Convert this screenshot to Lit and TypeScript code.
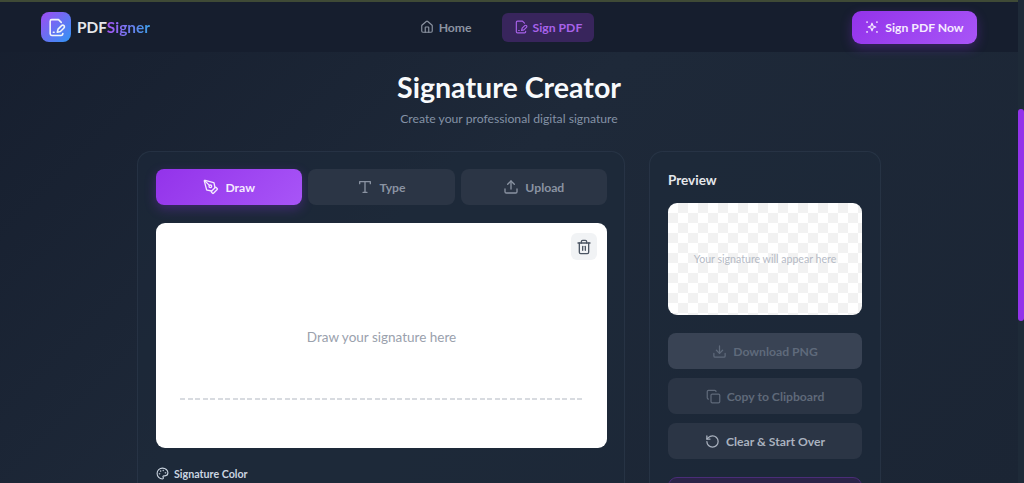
import { LitElement, css, html, svg } from "lit";
import { customElement } from "lit/decorators.js";

const icon = (body: unknown, size = 16) => html`<svg
  width=${size}
  height=${size}
  viewBox="0 0 24 24"
  fill="none"
  stroke="currentColor"
  stroke-width="2"
  stroke-linecap="round"
  stroke-linejoin="round"
>
  ${body}
</svg>`;

const fileSign = svg`<path d="M20 19.5v.5a2 2 0 0 1-2 2H6a2 2 0 0 1-2-2V4a2 2 0 0 1 2-2h8.5L18 5.5" /><path d="M8 18h1" /><path d="M18.42 9.61a2.1 2.1 0 1 1 2.97 2.97L16.95 17 13 18l.99-3.95 4.43-4.44Z" />`;
const home = svg`<path d="M15 21v-8a1 1 0 0 0-1-1h-4a1 1 0 0 0-1 1v8" /><path d="M3 10a2 2 0 0 1 .709-1.528l7-5.999a2 2 0 0 1 2.582 0l7 5.999A2 2 0 0 1 21 10v9a2 2 0 0 1-2 2H5a2 2 0 0 1-2-2z" />`;
const sparkle = svg`<path d="M12 5.500l1.800 4.700 4.700 1.800-4.700 1.800-1.800 4.700-1.800-4.700-4.700-1.800 4.700-1.800Z" /><path stroke-width="3" d="M3.500 3.500h.01M20.500 3.500h.01M3.500 20.500h.01M20.500 20.500h.01" />`;
const penTool = svg`<path d="M15.707 21.293a1 1 0 0 1-1.414 0l-1.586-1.586a1 1 0 0 1 0-1.414l5.586-5.586a1 1 0 0 1 1.414 0l1.586 1.586a1 1 0 0 1 0 1.414z" /><path d="m18 13-1.375-6.874a1 1 0 0 0-.746-.776L3.235 2.028a1 1 0 0 0-1.207 1.207L5.35 15.879a1 1 0 0 0 .776.746L13 18" /><path d="m2.3 2.3 7.286 7.286" /><circle cx="11" cy="11" r="2" />`;
const typeIcon = svg`<polyline points="4 7 4 4 20 4 20 7" /><line x1="9" y1="20" x2="15" y2="20" /><line x1="12" y1="4" x2="12" y2="20" />`;
const upload = svg`<path d="M21 15v4a2 2 0 0 1-2 2H5a2 2 0 0 1-2-2v-4" /><polyline points="17 8 12 3 7 8" /><line x1="12" y1="3" x2="12" y2="15" />`;
const download = svg`<path d="M21 15v4a2 2 0 0 1-2 2H5a2 2 0 0 1-2-2v-4" /><polyline points="7 10 12 15 17 10" /><line x1="12" y1="15" x2="12" y2="3" />`;
const copy = svg`<rect x="8" y="8" width="14" height="14" rx="2" /><path d="M4 16c-1.100 0-2-.9-2-2V4c0-1.100.9-2 2-2h10c1.100 0 2 .9 2 2" />`;
const rotate = svg`<path d="M3 12a9 9 0 1 0 9-9 9.750 9.750 0 0 0-6.740 2.740L3 8" /><path d="M3 3v5h5" />`;
const trash = svg`<path d="M3 6h18" /><path d="M19 6v14c0 1-1 2-2 2H7c-1 0-2-1-2-2V6" /><path d="M8 6V4c0-1 1-2 2-2h4c1 0 2 1 2 2v2" /><line x1="10" y1="11" x2="10" y2="17" /><line x1="14" y1="11" x2="14" y2="17" />`;
const palette = svg`<circle cx="13.5" cy="6.5" r=".5" /><circle cx="17.500" cy="10.500" r=".5" /><circle cx="8.500" cy="7.500" r=".5" /><circle cx="6.500" cy="12.500" r=".5" /><path d="M12 2C6.500 2 2 6.500 2 12s4.500 10 10 10c.926 0 1.648-.746 1.648-1.688 0-.437-.18-.835-.437-1.125-.29-.289-.438-.652-.438-1.125a1.640 1.640 0 0 1 1.668-1.668h1.996c3.051 0 5.555-2.503 5.555-5.554C21.965 6.012 17.461 2 12 2z" />`;

@customElement("app-root")
export class AppRoot extends LitElement {
  render() {
    return html`
      <div class="page">
        <div class="strip"></div>
        <header>
          <div class="brand">
            <span class="logo">${icon(fileSign, 19)}</span>
            <span class="name">PDF<span class="grad">Signer</span></span>
          </div>
          <nav>
            <a class="link">${icon(home, 14)}Home</a>
            <a class="link active">${icon(fileSign, 14)}Sign PDF</a>
          </nav>
          <button class="cta">${icon(sparkle, 14)}Sign PDF Now</button>
        </header>

        <main>
          <h1>Signature Creator</h1>
          <p class="sub">Create your professional digital signature</p>
          <div class="grid">
            <section class="card left">
              <div class="tabs">
                <button class="tab on">${icon(penTool, 16)}Draw</button>
                <button class="tab">${icon(typeIcon, 16)}Type</button>
                <button class="tab">${icon(upload, 16)}Upload</button>
              </div>
              <div class="canvas">
                <span class="trash">${icon(trash, 16)}</span>
                <span class="hint">Draw your signature here</span>
                <div class="baseline"></div>
              </div>
              <div class="label">${icon(palette, 13)}Signature Color</div>
            </section>

            <section class="card right">
              <h2>Preview</h2>
              <div class="preview">Your signature will appear here</div>
              <button class="act first">${icon(download, 15)}Download PNG</button>
              <button class="act second">${icon(copy, 15)}Copy to Clipboard</button>
              <button class="act third">${icon(rotate, 15)}Clear &amp; Start Over</button>
              <div class="promo"></div>
            </section>
          </div>
        </main>
        <div class="scroll"><div class="thumb"></div></div>
      </div>
    `;
  }

  static styles = css`
    :host {
      display: block;
      height: 483px;
      overflow: hidden;
      font-family: Lato, "Noto Sans", sans-serif;
    }
    * {
      box-sizing: border-box;
    }
    .page {
      position: relative;
      height: 483px;
      overflow: hidden;
      padding-right: 6px;
      background: linear-gradient(135deg, #161e2e 0%, #1e2939 45%, #1b2534 100%);
    }
    .strip {
      height: 2px;
      background: #3f4a36;
    }
    header {
      height: 50px;
      display: flex;
      align-items: center;
      justify-content: space-between;
      padding: 0 41px;
      background: #161e2e;
      position: relative;
    }
    .brand {
      display: flex;
      align-items: center;
      gap: 6px;
    }
    .logo {
      width: 30px;
      height: 30px;
      border-radius: 8px;
      display: flex;
      align-items: center;
      justify-content: center;
      color: #f1f5f9;
      background: linear-gradient(135deg, #a04bf3, #2f96f4);
    }
    .name {
      font-size: 15.4px;
      font-weight: 700;
      color: #e5e7eb;
    }
    .grad {
      background: linear-gradient(90deg, #a855f7, #3b9fe8);
      -webkit-background-clip: text;
      background-clip: text;
      color: transparent;
    }
    nav {
      display: flex;
      gap: 18px;
    }
    .link {
      display: flex;
      align-items: center;
      gap: 5px;
      height: 29px;
      padding: 0 12px;
      border-radius: 6px;
      font-size: 12.2px;
      font-weight: 700;
      color: #8b93a1;
    }
    .link.active {
      background: #38255c;
      color: #a862ea;
    }
    button {
      font-family: inherit;
      border: 0;
      display: flex;
      align-items: center;
      justify-content: center;
      padding: 0;
    }
    .cta {
      width: 125px;
      height: 33px;
      gap: 6px;
      border-radius: 9px;
      color: #f6ecff;
      font-size: 12.2px;
      font-weight: 700;
      background: linear-gradient(135deg, #9333ea, #a855f7);
      box-shadow: 0 4px 12px rgba(147, 51, 234, 0.3);
    }
    main {
      padding-top: 17px;
      display: flex;
      flex-direction: column;
      align-items: center;
    }
    h1 {
      margin: 0;
      font-size: 28.6px;
      line-height: 36px;
      font-weight: 700;
      color: #f8fafc;
    }
    .sub {
      margin: 5px 0 0;
      font-size: 12.2px;
      line-height: 18px;
      color: #8492a6;
    }
    .grid {
      margin-top: 23px;
      display: grid;
      grid-template-columns: 488px 232px;
      gap: 24px;
    }
    .card {
      border: 1px solid rgba(148, 163, 184, 0.09);
      border-radius: 14px;
      background: rgba(30, 41, 59, 0.55);
      padding: 17px 18px;
      height: 400px;
    }
    .left {
      padding-right: 17px;
    }
    .tabs {
      display: grid;
      grid-template-columns: repeat(3, 1fr);
      gap: 6px;
    }
    .tab {
      height: 36px;
      gap: 6px;
      border-radius: 8px;
      font-size: 12.2px;
      font-weight: 700;
      color: #8a93a2;
      background: #2b3545;
    }
    .tab.on {
      color: #f5eaff;
      background: linear-gradient(135deg, #9333ea, #a855f7);
      box-shadow: 0 4px 12px rgba(147, 51, 234, 0.3);
    }
    .canvas {
      position: relative;
      margin-top: 18px;
      height: 225px;
      background: #fff;
      border-radius: 9px;
      display: flex;
      align-items: center;
      justify-content: center;
    }
    .hint {
      font-size: 13.5px;
      color: #9aa1ad;
      margin-top: 2px;
    }
    .trash {
      position: absolute;
      top: 10px;
      right: 10px;
      width: 26px;
      height: 27px;
      border-radius: 6px;
      background: #f1f3f5;
      color: #4b5563;
      display: flex;
      align-items: center;
      justify-content: center;
    }
    .baseline {
      position: absolute;
      left: 24px;
      right: 25px;
      bottom: 48px;
      height: 2px;
      background: repeating-linear-gradient(
        90deg,
        #d8dbe0 0 5px,
        transparent 5px 7.5px
      );
    }
    .label {
      margin-top: 19px;
      display: flex;
      align-items: center;
      gap: 5px;
      font-size: 10.7px;
      font-weight: 700;
      color: #cbd5e1;
    }
    h2 {
      margin: 0;
      font-size: 13.5px;
      line-height: 18px;
      font-weight: 700;
      color: #e5e7eb;
      padding-top: 2px;
    }
    .preview {
      margin-top: 14px;
      height: 112px;
      border-radius: 9px;
      display: flex;
      align-items: center;
      justify-content: center;
      font-size: 10.6px;
      color: #b5bac5;
      background-color: #fff;
      background-image: conic-gradient(
        #f2f2f2 25%,
        #fff 0 50%,
        #f2f2f2 0 75%,
        #fff 0
      );
      background-size: 20px 20px;
    }
    .act {
      width: 100%;
      height: 36px;
      margin-top: 9px;
      gap: 6px;
      border-radius: 8px;
      font-size: 12.2px;
      font-weight: 700;
      background: #2b3545;
      color: #5f6979;
    }
    .act.first {
      margin-top: 18px;
      background: #394354;
      color: #5f6a7b;
    }
    .act.third {
      color: #aab2bf;
    }
    .promo {
      margin-top: 18px;
      height: 60px;
      border-radius: 9px;
      border: 1px solid #4a2d78;
      background: #2b2448;
    }
    .scroll {
      position: absolute;
      top: 0;
      right: 0;
      bottom: 0;
      width: 6px;
      background: #1e2a38;
    }
    .thumb {
      position: absolute;
      top: 109px;
      left: 0;
      width: 6px;
      height: 212px;
      border-radius: 3px;
      background: #9333ea;
    }
  `;
}

declare global {
  interface HTMLElementTagNameMap {
    "app-root": AppRoot;
  }
}
